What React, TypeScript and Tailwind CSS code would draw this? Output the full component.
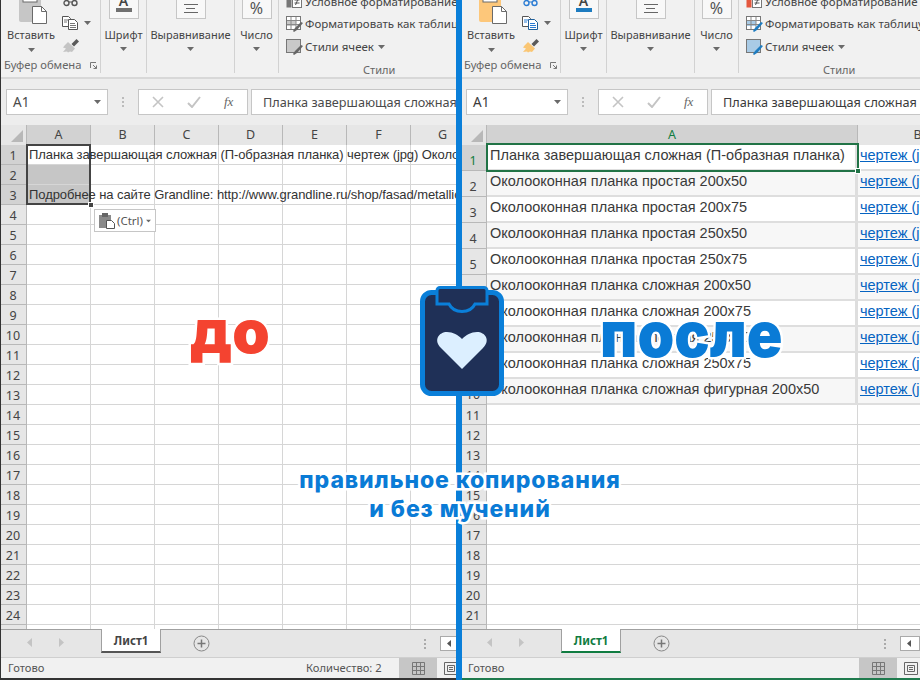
const UI = "font-['Noto_Sans',sans-serif]";
const CELL = "font-['Liberation_Sans',Arial,sans-serif]";
const HALO = "[-webkit-text-stroke:5px_#ffffff] [paint-order:stroke_fill]";

const LEFT_COLS = ["A", "B", "C", "D", "E", "F", "G"];
const LEFT_ROWS = Array.from({ length: 25 }, (_, i) => i + 1);
const RIGHT_TEXT = [
  "Планка завершающая сложная (П-образная планка)",
  "Околооконная планка простая 200х50",
  "Околооконная планка простая 200х75",
  "Околооконная планка простая 250х50",
  "Околооконная планка простая 250х75",
  "Околооконная планка сложная 200х50",
  "Околооконная планка сложная 200х75",
  "Околооконная планка сложная 250х50",
  "Околооконная планка сложная 250х75",
  "Околооконная планка сложная фигурная 200х50",
];
const RIGHT_EMPTY = Array.from({ length: 12 }, (_, i) => i + 11);

function Caret({ className = "" }: { className?: string }) {
  return (
    <svg width="7" height="4" viewBox="0 0 7 4" className={`shrink-0 ${className}`}>
      <path d="M0 0h7L3.5 4z" fill="#6a6a6a" />
    </svg>
  );
}

function PasteIcon({ color }: { color: boolean }) {
  return (
    <svg width="30" height="24" viewBox="0 0 30 24" className="shrink-0">
      <rect x="0" y="-8" width="22" height="30" rx="2" fill={color ? "#fdc77a" : "#c6c6c6"} />
      <rect x="4" y="-6" width="14" height="8" fill="#fff" stroke="#6a6a6a" />
      <path d="M13.5 6.5h9l5 5v12h-14z" fill="#fff" stroke="#6a6a6a" />
      <path d="M22.5 6.5v5h5" fill="none" stroke="#6a6a6a" />
    </svg>
  );
}

function RibbonTools({ color }: { color: boolean }) {
  const stroke = color ? "#2b7cd3" : "#555555";
  return (
    <div className="flex flex-col items-start">
      <svg width="16" height="7" viewBox="0 0 16 7" className="shrink-0 ml-[1px]">
        <circle cx="3.5" cy="3" r="2.5" fill="none" stroke={stroke} strokeWidth="1.4" />
        <circle cx="11.5" cy="3" r="2.5" fill="none" stroke={stroke} strokeWidth="1.4" />
        <path d="M6 2h4" stroke={stroke} />
      </svg>
      <div className="flex items-center gap-[5px] mt-[9px]">
        <svg width="17" height="14" viewBox="0 0 17 14" className="shrink-0">
          <path d="M.5.5h6l2 2v8H.5z" fill="#fff" stroke="#555" />
          <path d="M6.5 3.5h6l3 3v7h-9z" fill="#fff" stroke={color ? "#1f5f99" : "#555"} />
          <path d="M2 4h4M2 6h3M8 7.500h5M8 9.500h6M8 11.500h6" stroke={color ? "#2b7cd3" : "#777"} />
        </svg>
        <Caret />
      </div>
      <svg width="17" height="14" viewBox="0 0 17 14" className="shrink-0 mt-[9px]">
        <path d="M9.500 5l5-5 2.500 2.500-5 5z" fill="#5a5a5a" />
        <path d="M6 3l7 6.500-3 3.500-2-.500-2 1-1-1-4 .500 3-3.500-3-1 2-2.500z" fill={color ? "#fac674" : "#c4c4c4"} />
      </svg>
    </div>
  );
}

function BigButton({ label, width, pad, children }: { label: string; width: string; pad: string; children: React.ReactNode }) {
  return (
    <div className={`${width} h-[73px] shrink-0 border-r border-[#d2d2d2] flex flex-col items-center`}>
      <div className={`${pad} w-[30px] h-[29px] -mt-[10px] border border-[#c6c6c6] bg-[#f8f8f8] flex flex-col items-center justify-end`}>
        {children}
      </div>
      <div className="text-[11px] leading-[16px] mt-[8px] text-[#444] whitespace-nowrap">{label}</div>
      <Caret className="mt-[4px]" />
    </div>
  );
}

function StyleIcon({ color, table }: { color: boolean; table?: boolean }) {
  const fill = color ? "#a9cbe6" : "#c9c9c9";
  const accent = color ? "#1e7cc0" : "#666666";
  return (
    <svg width="17" height="16" viewBox="0 0 17 16" className="shrink-0">
      <rect x=".5" y=".5" width="14" height="13" fill={table ? "#fff" : fill} stroke="#777" />
      {table && <rect x="1" y="4" width="9" height="6" fill={fill} />}
      {table && <path d="M1 4.500h13M1 8.500h13M5 1v12M10 1v12" stroke="#888" />}
      <path d="M15 6l2 1-6 7-3 2-1-1 2-3z" fill={accent} />
    </svg>
  );
}

function Ribbon({ color }: { color: boolean }) {
  return (
    <div className={`${UI} h-[79px] bg-[#f1f1f1] border-b-2 border-[#d8d8d8] flex overflow-hidden shrink-0`}>
      <div className="w-[101px] h-[73px] shrink-0 border-r border-[#d2d2d2] flex flex-col">
        <div className="flex h-[62px]">
          <div className="w-[62px] flex flex-col items-center">
            <div className="ml-[5px]"><PasteIcon color={color} /></div>
            <div className="text-[11px] leading-[16px] mt-[3px] text-[#444]">Вставить</div>
            <Caret className="mt-[5px]" />
          </div>
          <RibbonTools color={color} />
        </div>
        <div className="flex items-center pl-[4px] text-[11.200px] leading-[16px] text-[#666] whitespace-nowrap">
          Буфер обмена
          <svg width="7" height="7" viewBox="0 0 7 7" className="shrink-0 ml-[9px]">
            <path d="M.5 6V.5H6M3 3l3.500 3.500M6.500 3.500v3h-3" fill="none" stroke="#777" />
          </svg>
        </div>
      </div>
      <BigButton label="Шрифт" width="w-[46px]" pad="pb-[6px]">
        <span className="text-[14px] font-semibold leading-[12px] text-[#444]">A</span>
        <span className={`w-[16px] h-[4px] mt-[1px] ${color ? "bg-[#1e7cc0]" : "bg-[#707070]"}`} />
      </BigButton>
      <BigButton label="Выравнивание" width="w-[88px]" pad="pb-[5px]">
        <span className="w-[14px] h-[1px] bg-[#666]" />
        <span className="w-[9px] h-[1px] mt-[3px] bg-[#666]" />
        <span className="w-[14px] h-[1px] mt-[3px] bg-[#666]" />
      </BigButton>
      <BigButton label="Число" width="w-[44px]" pad="pb-[1px]">
        <span className="text-[16px] leading-[18px] text-[#555]">%</span>
      </BigButton>
      <div className="flex-1 min-w-0 pl-[7px] -mt-[6px] flex flex-col text-[11.500px] leading-[16px] text-[#444] whitespace-nowrap relative">
        <div className="flex items-center gap-[3px] h-[16px]">
          <svg width="16" height="14" viewBox="0 0 16 14" className="shrink-0">
            <rect x=".5" y=".5" width="5" height="12" fill={color ? "#e4573d" : "#777"} />
            <rect x="6.500" y=".5" width="9" height="12" fill="#fff" stroke="#777" />
            <path d="M8.500 5h5M8.500 8h5M12.500 3l-3 7" stroke="#555" />
          </svg>
          Условное форматирование
        </div>
        <div className="flex items-center gap-[2px] h-[16px] mt-[6px]">
          <StyleIcon color={color} table />
          Форматировать как таблицу
        </div>
        <div className="flex items-center gap-[2px] h-[16px] mt-[7px]">
          <StyleIcon color={color} />
          Стили ячеек
          <Caret className="ml-[2px]" />
        </div>
        <div className="absolute left-[84px] top-[68px] text-[11px] text-[#666]">Стили</div>
      </div>
    </div>
  );
}

function FormulaBar({ color }: { color: boolean }) {
  const text = color ? "text-[#3a3a3a]" : "text-[#4a4a4a]";
  return (
    <div className={`${UI} h-[46px] shrink-0 bg-[#ededed] flex items-start pt-[10px]`}>
      <div className="ml-[6px] w-[102px] h-[26px] bg-white border border-[#c6c6c6] flex items-center justify-between pl-[6px] pr-[6px]">
        <span className={`text-[13.500px] ${text}`}>A1</span>
        <Caret />
      </div>
      <div className="w-[30px] h-[26px] flex flex-col items-center justify-center gap-[2px]">
        <span className="w-[2px] h-[2px] bg-[#bbb]" />
        <span className="w-[2px] h-[2px] bg-[#bbb]" />
        <span className="w-[2px] h-[2px] bg-[#bbb]" />
      </div>
      <div className="w-[110px] h-[26px] bg-white border border-[#c6c6c6] flex items-center pl-[13px]">
        <svg width="12" height="12" viewBox="0 0 12 12" className="shrink-0">
          <path d="M1 1l10 10M11 1L1 11" stroke="#c4c4c4" strokeWidth="1.600" />
        </svg>
        <svg width="14" height="12" viewBox="0 0 14 12" className="shrink-0 ml-[23px]">
          <path d="M1 7l4 4 8-10" fill="none" stroke="#c4c4c4" strokeWidth="2" />
        </svg>
        <span className="ml-[23px] font-['Liberation_Serif',serif] italic text-[13px] text-[#666]">fx</span>
      </div>
      <div className={`ml-[3px] flex-1 h-[26px] bg-white border border-[#c6c6c6] border-r-0 pl-[11px] text-[12.700px] leading-[24px] overflow-hidden whitespace-nowrap ${text}`}>
        Планка завершающая сложная (П-образная планка)
      </div>
    </div>
  );
}

function Tabs({ color }: { color: boolean }) {
  return (
    <div className={`${UI} h-[28px] shrink-0 bg-[#e6e6e6] border-t border-[#a0a0a0] flex relative`}>
      <svg width="38" height="10" viewBox="0 0 38 10" className="shrink-0 ml-[27px] mt-[8px]">
        <path d="M5 0v9L0 4.500zM32 0v9l5-4.500z" fill="#c4c4c4" />
      </svg>
      <div className={`ml-[36px] w-[60px] h-[24px] -mt-[1px] bg-white border-x border-[#a0a0a0] border-b-2 text-center text-[11.500px] font-bold leading-[23px] ${color ? "border-b-[#107c41] text-[#107c41]" : "border-b-[#555] text-[#444]"}`}>
        Лист1
      </div>
      <svg width="17" height="17" viewBox="0 0 17 17" className="shrink-0 ml-[32px] mt-[5px]">
        <circle cx="8.500" cy="8.500" r="7.500" fill="none" stroke="#888" />
        <path d="M8.500 4.500v8M4.500 8.500h8" stroke="#777" strokeWidth="1.500" />
      </svg>
      <div className="ml-auto flex items-center">
        <div className="flex flex-col gap-[2px] mr-[14px]">
          <span className="w-[2px] h-[2px] bg-[#aaa]" />
          <span className="w-[2px] h-[2px] bg-[#aaa]" />
          <span className="w-[2px] h-[2px] bg-[#aaa]" />
        </div>
        <div className="w-[20px] h-[15px] bg-white border border-[#aaa] flex items-center pl-[6px]">
          <svg width="4" height="7" viewBox="0 0 4 7"><path d="M4 0v7L0 3.500z" fill="#555" /></svg>
        </div>
      </div>
    </div>
  );
}

function StatusBar({ color, count }: { color: boolean; count?: string }) {
  return (
    <div className={`${UI} h-[23px] shrink-0 bg-[#f1f1f1] border-t border-[#cfcfcf] border-b-2 ${color ? "border-b-[#1f7a4d]" : "border-b-[#333]"} flex items-stretch text-[11.200px] leading-[20px] text-[#555]`}>
      <div className="pl-[8px] w-[306px]">Готово</div>
      <div className="w-[93px]">{count}</div>
      <div className="w-[38px] bg-[#c6c6c6] flex items-center justify-center">
        <svg width="13" height="13" viewBox="0 0 13 13">
          <path d="M.5.5h12v12H.5zM4.500.5v12M8.500.5v12M.5 4.500h12M.5 8.500h12" fill="none" stroke="#777" />
        </svg>
      </div>
      <div className="pl-[7px] flex items-center">
        <svg width="14" height="13" viewBox="0 0 14 13">
          <path d="M.5.5h13v12H.5zM3.500 3.500h7v6h-7zM5 5.500h4M5 7.500h4" fill="none" stroke="#666" />
        </svg>
      </div>
    </div>
  );
}

function HeaderCell({ label, width, active, green }: { label: string; width: string; active?: boolean; green?: boolean }) {
  return (
    <div className={`${width} shrink-0 h-full border-r border-[#b8b8b8] text-center text-[12.500px] leading-[20px] ${active ? "bg-[#d2d2d2]" : "bg-[#e6e6e6]"} ${green ? "text-[#107c41]" : "text-[#444]"}`}>
      {label}
    </div>
  );
}

function Corner() {
  return (
    <div className="w-[27px] shrink-0 h-full bg-[#e6e6e6] border-r border-[#b8b8b8] flex justify-end items-end pr-[3px] pb-[3px]">
      <svg width="12" height="12" viewBox="0 0 12 12"><path d="M12 0v12H0z" fill="#b8b8b8" /></svg>
    </div>
  );
}

function LeftSheet() {
  return (
    <div className="flex-1 min-h-0 overflow-hidden bg-white relative">
      <div className={`${UI} h-[20px] flex`}>
        <Corner />
        {LEFT_COLS.map((c) => (
          <HeaderCell key={c} label={c} width="w-[64px]" active={c === "A"} />
        ))}
      </div>
      {LEFT_ROWS.map((r) => (
        <div key={r} className="h-[20px] flex">
          <div className={`${UI} w-[27px] shrink-0 border-r border-b border-[#b8b8b8] text-center text-[12.500px] leading-[21px] text-[#444] ${r <= 3 ? "bg-[#d2d2d2]" : "bg-[#e6e6e6]"}`}>
            {r}
          </div>
          {LEFT_COLS.map((c, i) => (
            <div key={c} className={`w-[64px] shrink-0 border-b border-r border-[#d6d6d6] ${i === 0 && (r === 2 || r === 3) ? "bg-[#c6c6c6]" : ""} ${i === 0 && r <= 3 ? "border-r-transparent" : ""}`}>
              {i === 0 && r === 1 && (
                <div className={`${CELL} relative z-10 pl-[2px] text-[13px] leading-[20px] tracking-[-0.08px] whitespace-nowrap text-[#333]`}>
                  Планка завершающая сложная (П-образная планка) чертеж (jpg) Околооконная планка
                </div>
              )}
              {i === 0 && r === 3 && (
                <div className={`${CELL} relative z-10 pl-[2px] text-[13px] leading-[20px] tracking-[-0.08px] whitespace-nowrap text-[#333]`}>
                  Подробнее на сайте Grandline: http://www.grandline.ru/shop/fasad/metallicheskij
                </div>
              )}
            </div>
          ))}
        </div>
      ))}
    </div>
  );
}

function RightSheet() {
  return (
    <div className="flex-1 min-h-0 overflow-hidden bg-white relative">
      <div className={`${UI} h-[20px] flex`}>
        <Corner />
        <HeaderCell label="A" width="w-[371px]" active green />
        <HeaderCell label="B" width="w-[120px]" />
      </div>
      {RIGHT_TEXT.map((t, i) => (
        <div key={t} className="h-[26px] flex">
          <div className={`${UI} w-[27px] shrink-0 border-r border-b border-[#b8b8b8] flex items-end justify-center text-[12.500px] leading-[18px] ${i === 0 ? "bg-[#d2d2d2] text-[#107c41]" : "bg-[#e6e6e6] text-[#444]"}`}>
            {i + 1}
          </div>
          <div className={`${CELL} w-[371px] shrink-0 border-b-2 border-r-[3px] border-[#dedede] pl-[3px] text-[14.500px] leading-[21px] whitespace-nowrap text-[#3a3a3a] ${i === 0 ? "bg-white" : i % 2 ? "bg-[#f7f7f7]" : "bg-white"}`}>
            {t}
          </div>
          <div className={`${CELL} flex-1 border-b-2 border-[#dedede] pl-[2px] text-[14.500px] leading-[21px] whitespace-nowrap text-[#0563c1] underline ${i % 2 ? "bg-[#f7f7f7]" : "bg-white"}`}>
            чертеж (jpg)
          </div>
        </div>
      ))}
      {RIGHT_EMPTY.map((r) => (
        <div key={r} className="h-[20px] flex">
          <div className={`${UI} w-[27px] shrink-0 bg-[#e6e6e6] border-r border-b border-[#b8b8b8] text-center text-[12.500px] leading-[21px] text-[#444]`}>
            {r}
          </div>
          <div className="w-[371px] shrink-0 border-b border-r border-[#d6d6d6]" />
          <div className="flex-1 border-b border-[#d6d6d6]" />
        </div>
      ))}
      <div className="absolute left-[26px] top-[18px] w-[373px] h-[29px] border-2 border-[#217346]" />
      <div className="absolute left-[395px] top-[43px] w-[6px] h-[6px] bg-[#217346] border border-white" />
    </div>
  );
}

function Logo() {
  return (
    <svg width="84" height="111" viewBox="0 0 84 111" className="absolute left-[420px] top-[285px]">
      <rect x="2.500" y="7.500" width="79" height="101" rx="9" fill="#1f3057" stroke="#0a7fd9" strokeWidth="5" />
      <path d="M20 2.500h44a3 3 0 0 1 3 3v13.500H55c-2 4-6 7.500-13 7.500s-11-3.500-13-7.500H17V5.500a3 3 0 0 1 3-3z" fill="#1f3057" stroke="#0a7fd9" strokeWidth="3" />
      <path d="M42 84L21 63c-8-8-2-16 6-16 6 0 11 3 15 7 4-4 9-7 15-7 8 0 14 8 6 16z" fill="#dcefff" />
    </svg>
  );
}

export default function App() {
  return (
    <div className="relative w-[920px] h-[680px] overflow-hidden flex bg-white">
      <div className="w-[456px] h-full shrink-0 overflow-hidden border-l border-[#333] relative">
        <div className="w-[460px] h-full -ml-[1px] flex flex-col">
          <Ribbon color={false} />
          <FormulaBar color={false} />
          <LeftSheet />
          <Tabs color={false} />
          <StatusBar color={false} count="Количество: 2" />
        </div>
        <div className="absolute left-[25px] top-[144px] w-[65px] h-[61px] border-2 border-[#444]" />
        <div className="absolute left-[87px] top-[202px] w-[6px] h-[6px] bg-[#444] border border-white" />
        <div className={`${UI} absolute left-[93px] top-[209px] w-[62px] h-[23px] bg-white border border-[#c6c6c6] flex items-center pl-[4px] text-[11.500px] text-[#555]`}>
          <svg width="16" height="16" viewBox="0 0 16 16" className="shrink-0">
            <rect x="0" y="2" width="12" height="13" fill="#8a8a8a" />
            <rect x="3" y="0" width="6" height="4" fill="#666" />
            <path d="M7.500 7.500h5l3 3v5h-8z" fill="#fff" stroke="#555" />
          </svg>
          <span className="ml-[2px]">(Ctrl)</span>
          <Caret className="ml-[2px] scale-75" />
        </div>
      </div>
      <div className="w-[6px] h-full shrink-0 bg-[#0a7fd9]" />
      <div className="flex-1 h-full overflow-hidden">
        <div className="w-[460px] h-full -ml-[2px] flex flex-col">
          <Ribbon color />
          <FormulaBar color />
          <RightSheet />
          <Tabs color />
          <StatusBar color />
        </div>
      </div>

      <div className={`absolute left-[190px] top-[291px] font-['Inter',sans-serif] font-black text-[60px] leading-[80px] text-[#f44330] ${HALO}`}>до</div>
      <Logo />
      <div className={`absolute left-[600px] top-[296px] origin-left scale-x-[0.92] font-['Inter',sans-serif] font-black text-[64px] leading-[76px] text-[#0a7bd6] ${HALO}`}>после</div>
      <div className={`absolute left-[260px] top-[466px] w-[400px] text-center font-['Inter',sans-serif] font-extrabold text-[23px] leading-[29px] tracking-[0.9px] text-[#0a7bd6] ${HALO}`}>
        правильное копирования
        <br />
        и без мучений
      </div>
    </div>
  );
}
